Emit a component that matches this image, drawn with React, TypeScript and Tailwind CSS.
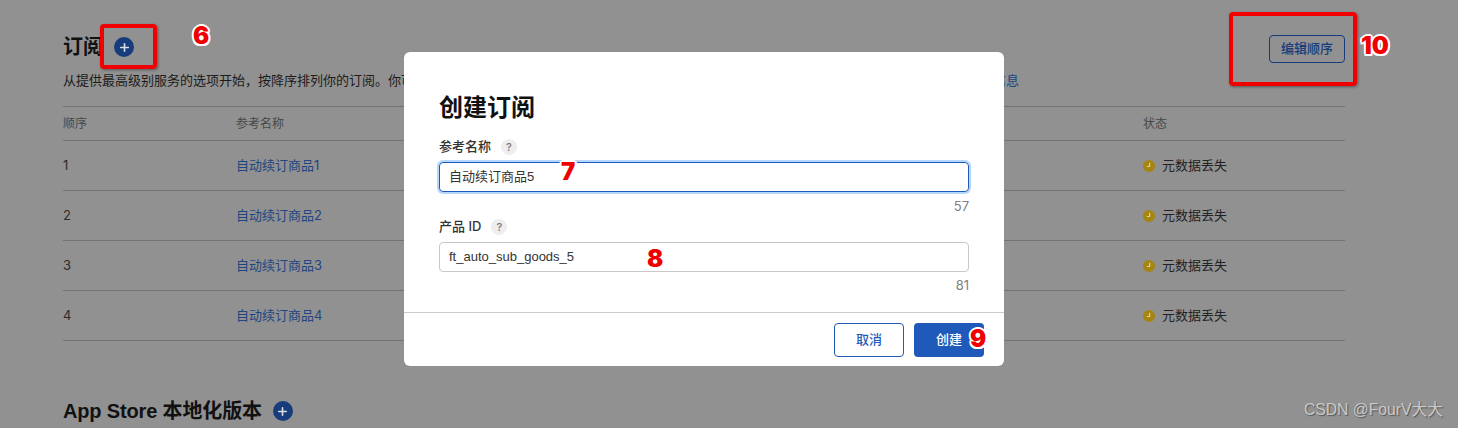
import React from "react";
import { Plus } from "lucide-react";

const font = "font-['Inter','Noto_Sans_CJK_SC',sans-serif]";

function PlusCircle() {
  return (
    <span className="flex h-[20px] w-[20px] shrink-0 items-center justify-center rounded-full bg-[#173c7c]">
      <Plus size={13} strokeWidth={3} color="#d8dde6" />
    </span>
  );
}

function StatusIcon() {
  return (
    <svg width="12" height="12" viewBox="0 0 12 12" className="shrink-0">
      <circle cx="6" cy="6" r="6" fill="#a5850f" />
      <path d="M6.6 2.8V6.5H3.8" fill="none" stroke="#d8cfa8" strokeWidth="1.2" />
    </svg>
  );
}

function Row({ n }: { n: number }) {
  return (
    <div className="grid h-[50px] grid-cols-[173px_1fr_202px] items-center border-b border-[#737373] pt-[1px]">
      <span className="text-[13px] text-[#2b2b2b]">{n}</span>
      <span className="text-[13px] text-[#1f4680]">自动续订商品{n}</span>
      <span className="flex items-center gap-[7px] text-[13px] text-[#222222]">
        <StatusIcon />
        元数据丢失
      </span>
    </div>
  );
}

function Help() {
  return (
    <span className="flex h-[16px] w-[16px] items-center justify-center rounded-full bg-[#eeeeee] text-[11px] font-medium text-[#777777]">
      ?
    </span>
  );
}

function Mark({ className, children }: { className: string; children: React.ReactNode }) {
  return (
    <span
      className={`absolute text-[24px] leading-none font-black text-[#f00000] [text-shadow:2px_0_0_#fff,-2px_0_0_#fff,0_2px_0_#fff,0_-2px_0_#fff,1.5px_1.5px_0_#fff,-1.5px_1.5px_0_#fff,1.5px_-1.5px_0_#fff,-1.5px_-1.5px_0_#fff] ${className}`}
    >
      {children}
    </span>
  );
}

export default function App() {
  return (
    <div className={`relative h-[428px] w-[1458px] overflow-hidden bg-[#919191] ${font}`}>
      <div className="px-[113px] pt-[35px] pl-[63px]">
        <div className="flex h-[28px] items-start justify-between">
          <div className="flex items-center">
            <h2 className="text-[20px] leading-[24px] font-semibold text-[#111111]">订阅</h2>
            <span className="ml-[11px]">
              <PlusCircle />
            </span>
          </div>
          <button className="h-[28px] w-[76px] rounded-[4px] border border-[#173c7c] text-[13px] font-medium text-[#173c7c]">
            编辑顺序
          </button>
        </div>
        <div className="mt-[8px] flex w-[956px] justify-between text-[13px] leading-[18px] text-[#1c1c1c]">
          <span>从提供最高级别服务的选项开始，按降序排列你的订阅。你可以</span>
          <span className="text-[#1f4680]">了解更多信息</span>
        </div>
        <div className="mt-[17px] border-t border-[#737373]">
          <div className="grid h-[34px] grid-cols-[173px_1fr_202px] items-center border-b border-[#737373] text-[12px] text-[#474747]">
            <span>顺序</span>
            <span>参考名称</span>
            <span>状态</span>
          </div>
          <Row n={1} />
          <Row n={2} />
          <Row n={3} />
          <Row n={4} />
        </div>
        <div className="mt-[58px] flex items-center">
          <h2 className="font-['Liberation_Sans','Noto_Sans_CJK_SC',sans-serif] text-[20px] leading-[24px] font-bold tracking-[-0.15px] text-[#111111]">
            App Store 本地化版本
          </h2>
          <span className="ml-[11px]">
            <PlusCircle />
          </span>
        </div>
      </div>

      <div className="absolute top-[52px] left-[404px] flex h-[314px] w-[600px] flex-col rounded-[6px] bg-white">
        <div className="flex-1 px-[35px]">
          <h1 className="mt-[41px] text-[24px] leading-[30px] font-semibold text-[#111111]">创建订阅</h1>
          <div className="mt-[14px] flex h-[20px] items-center gap-[10px] text-[13px] font-medium text-[#333333]">
            参考名称
            <Help />
          </div>
          <div className="mt-[5px] flex h-[30px] w-[530px] items-center rounded-[4px] border border-[#1f5abb] pl-[9px] font-['Liberation_Sans','Noto_Sans_CJK_SC',sans-serif] text-[13px] text-[#333333] shadow-[0_0_0_2px_#b5d7fb]">
            自动续订商品5
          </div>
          <div className="mt-[6px] w-[530px] text-right text-[13px] leading-[16px] text-[#808080]">57</div>
          <div className="mt-[3px] flex h-[20px] items-center gap-[10px] text-[13px] font-medium text-[#333333]">
            产品 ID
            <Help />
          </div>
          <div className="mt-[5px] flex h-[30px] w-[530px] items-center rounded-[4px] border border-[#c8c8c8] pl-[9px] font-['Liberation_Sans','Noto_Sans_CJK_SC',sans-serif] text-[13px] text-[#333333]">
            ft_auto_sub_goods_5
          </div>
          <div className="mt-[5px] w-[530px] text-right text-[13px] leading-[16px] text-[#808080]">81</div>
        </div>
        <div className="flex h-[54px] justify-end gap-[10px] border-t border-[#cccccc] pt-[10px] pr-[20px]">
          <button className="h-[34px] w-[70px] rounded-[4px] border border-[#1f5abb] text-[13px] font-medium text-[#1f5abb]">
            取消
          </button>
          <button className="h-[34px] w-[70px] rounded-[4px] bg-[#1f5abb] text-[13px] font-medium text-white">
            创建
          </button>
        </div>
      </div>

      <div className="absolute top-[24px] left-[100px] h-[45px] w-[57px] rounded-[4px] border-[4px] border-[#f00000] shadow-[1px_1px_3px_rgba(0,0,0,0.4)]" />
      <div className="absolute top-[12px] left-[1229px] h-[74px] w-[128px] rounded-[4px] border-[4px] border-[#f00000] shadow-[1px_1px_3px_rgba(0,0,0,0.4)]" />
      <Mark className="top-[24px] left-[193px]">6</Mark>
      <Mark className="top-[160px] left-[561px]">7</Mark>
      <Mark className="top-[247px] left-[647px]">8</Mark>
      <Mark className="top-[327px] left-[970px]">9</Mark>
      <Mark className="top-[34px] left-[1361px]">10</Mark>

      <span className="absolute top-[400px] left-[1304px] font-['Liberation_Sans','Noto_Sans_CJK_SC',sans-serif] text-[15.7px] leading-[20px] text-[#c9c9c9] [text-shadow:1px_1px_1px_#555555]">
        CSDN @FourV大大
      </span>
    </div>
  );
}
